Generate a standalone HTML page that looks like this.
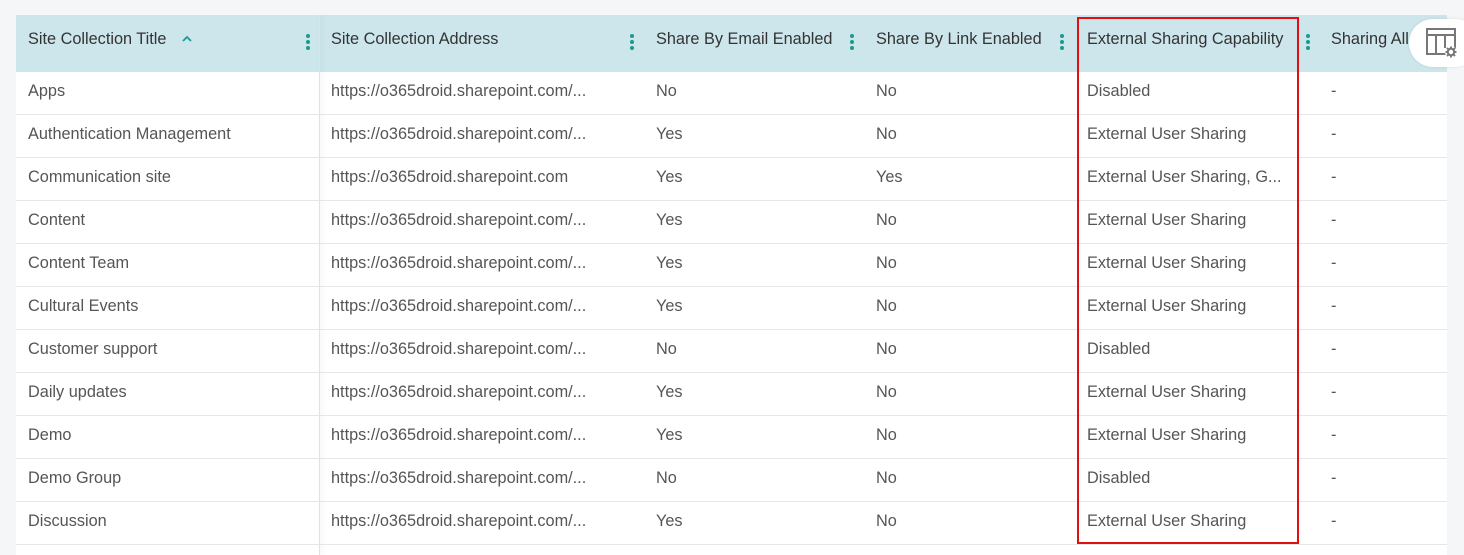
<!DOCTYPE html>
<html><head><style>
*{margin:0;padding:0;box-sizing:border-box}
body{width:1464px;height:553px;background:#f4f6f8;font-family:"Liberation Sans",sans-serif;position:relative;overflow:hidden}
.tbl{position:absolute;left:16px;top:15px;width:1431px;height:540px;background:#fff;overflow:hidden}
.hdr{position:absolute;left:0;top:0;width:100%;height:57px;background:#cde6ec}
.c{position:absolute;font-size:16.3px;line-height:20px;white-space:nowrap;color:#555}
.h{color:#333;top:14px}
.dots{position:absolute;top:19px;width:4px}
.dots i{display:block;width:4px;height:4px;border-radius:2px;background:#1a9a8e;margin-bottom:2px}
.row{position:absolute;left:0;width:100%;height:1px;background:#e6e6e6}
.pin{position:absolute;left:303px;top:0;width:1px;height:540px;background:#e2e2e2;box-shadow:2px 0 4px rgba(0,0,0,.12)}
</style></head><body>
<div class="tbl">
<div class="hdr"></div>
<div class="pin"></div>
<div class="c h" style="left:12px">Site Collection Title</div>
<svg style="position:absolute;left:165px;top:20px" width="12" height="8" viewBox="0 0 12 8"><path d="M2 6L6 2L10 6" fill="none" stroke="#1a9a8e" stroke-width="1.8"/></svg>
<div class="c h" style="left:315px">Site Collection Address</div>
<div class="c h" style="left:640px">Share By Email Enabled</div>
<div class="c h" style="left:860px">Share By Link Enabled</div>
<div class="c h" style="left:1071px">External Sharing Capability</div>
<div class="c h" style="left:1315px">Sharing All</div>
<div class="dots" style="left:290px"><i></i><i></i><i></i></div>
<div class="dots" style="left:614px"><i></i><i></i><i></i></div>
<div class="dots" style="left:834px"><i></i><i></i><i></i></div>
<div class="dots" style="left:1044px"><i></i><i></i><i></i></div>
<div class="dots" style="left:1290px"><i></i><i></i><i></i></div>
<div id="rows"></div>
</div>
<div style="position:absolute;left:1077px;top:17px;width:222px;height:527px;border:2px solid #e01010"></div>
<div style="position:absolute;left:1409px;top:19px;width:70px;height:48px;background:#fff;border-radius:24px;box-shadow:0 0 3px rgba(0,0,0,.1)">
<svg width="34" height="34" viewBox="0 0 34 34" style="position:absolute;left:17px;top:8px" fill="none" stroke="#777" stroke-width="2">
<rect x="1" y="2" width="28" height="25"/><path d="M1 8H29M10 8V27M19 8V21"/>
<circle cx="25" cy="25" r="6" fill="#fff" stroke="none"/>
<circle cx="25" cy="25" r="3.2"/><path d="M25 19.5V21.5M25 28.5V30.5M19.5 25H21.5M28.5 25H30.5M21 21L22.5 22.5M27.5 27.5L29 29M29 21L27.5 22.5M22.5 27.5L21 29"/>
</svg></div>
<script>
var d=[["Apps","https://o365droid.sharepoint.com/...","No","No","Disabled"],
["Authentication Management","https://o365droid.sharepoint.com/...","Yes","No","External User Sharing"],
["Communication site","https://o365droid.sharepoint.com","Yes","Yes","External User Sharing, G..."],
["Content","https://o365droid.sharepoint.com/...","Yes","No","External User Sharing"],
["Content Team","https://o365droid.sharepoint.com/...","Yes","No","External User Sharing"],
["Cultural Events","https://o365droid.sharepoint.com/...","Yes","No","External User Sharing"],
["Customer support","https://o365droid.sharepoint.com/...","No","No","Disabled"],
["Daily updates","https://o365droid.sharepoint.com/...","Yes","No","External User Sharing"],
["Demo","https://o365droid.sharepoint.com/...","Yes","No","External User Sharing"],
["Demo Group","https://o365droid.sharepoint.com/...","No","No","Disabled"],
["Discussion","https://o365droid.sharepoint.com/...","Yes","No","External User Sharing"]];
var xs=[12,315,640,860,1071,1315],h="";
d.forEach(function(r,i){var y=57+i*43;r=r.concat(["-"]);
r.forEach(function(t,j){h+='<div class="c" style="left:'+xs[j]+'px;top:'+(y+9)+'px">'+t+'</div>'});
h+='<div class="row" style="top:'+(y+42)+'px"></div>';});
document.getElementById("rows").innerHTML=h;
</script>
</body></html>
